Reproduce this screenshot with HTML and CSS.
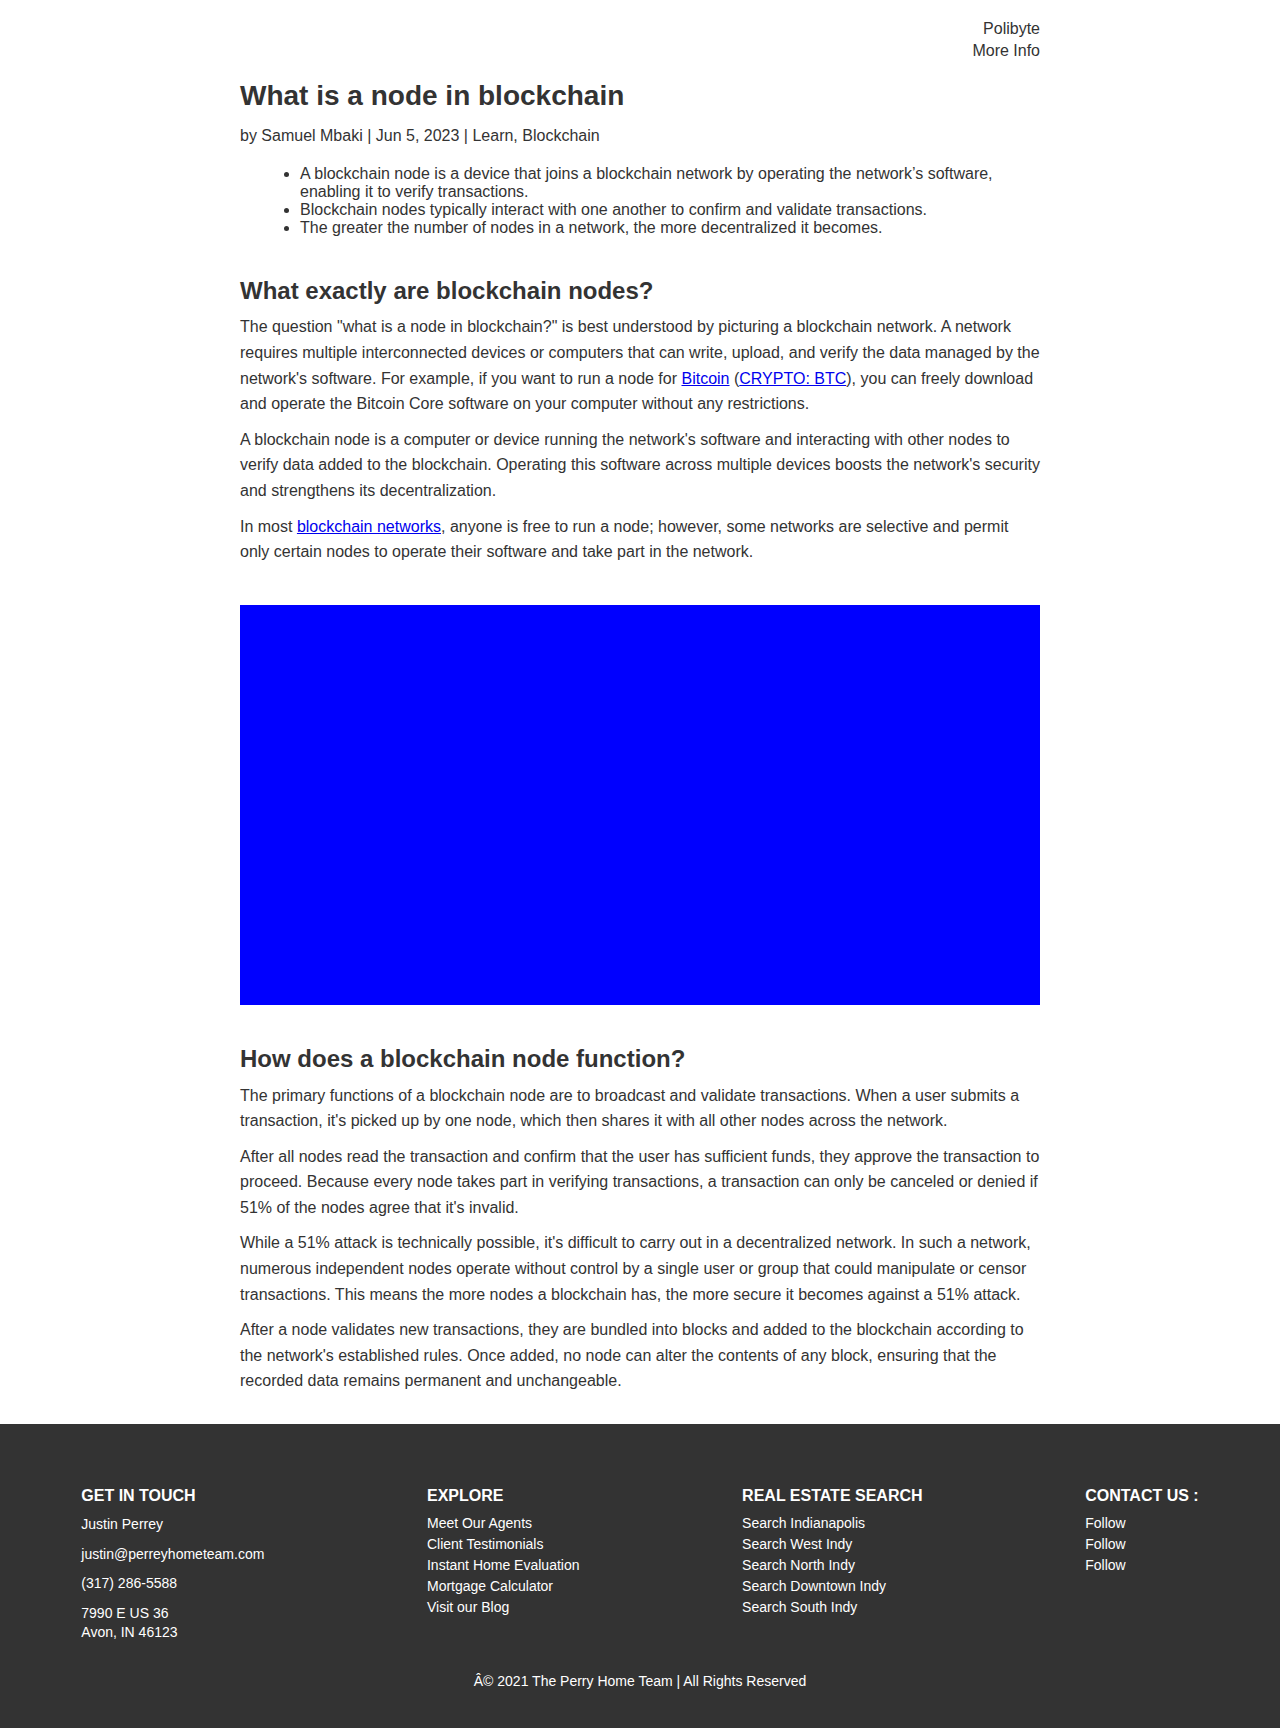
FILE: index.html
```html
<!DOCTYPE html>
<html lang="en">
<head>
<meta charset="utf-8">
<title>What is a node in blockchain</title>
<link rel="stylesheet" href="styles.css">
</head>
<body>
<div class="page">
  <header class="site-header">
    <ul class="top-nav">
      <li>Polibyte</li>
      <li>More Info</li>
    </ul>
  </header>

  <main class="article">
    <h1 class="title">What is a node in blockchain</h1>
    <p class="meta">by Samuel Mbaki | Jun 5, 2023 | Learn, Blockchain</p>
    <ul class="summary">
      <li>A blockchain node is a device that joins a blockchain network by operating the network’s software, enabling it to verify transactions.</li>
      <li>Blockchain nodes typically interact with one another to confirm and validate transactions.</li>
      <li>The greater the number of nodes in a network, the more decentralized it becomes.</li>
    </ul>

    <section class="section">
      <h2>What exactly are blockchain nodes?</h2>
      <p>The question "what is a node in blockchain?" is best understood by picturing a blockchain network. A network requires multiple interconnected devices or computers that can write, upload, and verify the data managed by the network's software. For example, if you want to run a node for <a href="#">Bitcoin</a> (<a href="#">CRYPTO: BTC</a>), you can freely download and operate the Bitcoin Core software on your computer without any restrictions.</p>
      <p>A blockchain node is a computer or device running the network's software and interacting with other nodes to verify data added to the blockchain. Operating this software across multiple devices boosts the network's security and strengthens its decentralization.</p>
      <p>In most <a href="#">blockchain networks</a>, anyone is free to run a node; however, some networks are selective and permit only certain nodes to operate their software and take part in the network.</p>
    </section>

    <div class="section figure"></div>

    <section class="section">
      <h2>How does a blockchain node function?</h2>
      <p>The primary functions of a blockchain node are to broadcast and validate transactions. When a user submits a transaction, it's picked up by one node, which then shares it with all other nodes across the network.</p>
      <p>After all nodes read the transaction and confirm that the user has sufficient funds, they approve the transaction to proceed. Because every node takes part in verifying transactions, a transaction can only be canceled or denied if 51% of the nodes agree that it's invalid.</p>
      <p>While a 51% attack is technically possible, it's difficult to carry out in a decentralized network. In such a network, numerous independent nodes operate without control by a single user or group that could manipulate or censor transactions. This means the more nodes a blockchain has, the more secure it becomes against a 51% attack.</p>
      <p>After a node validates new transactions, they are bundled into blocks and added to the blockchain according to the network's established rules. Once added, no node can alter the contents of any block, ensuring that the recorded data remains permanent and unchangeable.</p>
    </section>
  </main>
</div>

<footer class="site-footer">
  <div class="footer-cols">
    <div class="footer-col">
      <h3>GET IN TOUCH</h3>
      <p>Justin Perrey</p>
      <p>justin@perreyhometeam.com</p>
      <p>(317) 286-5588</p>
      <p>7990 E US 36<br>Avon, IN 46123</p>
    </div>
    <div class="footer-col">
      <h3>EXPLORE</h3>
      <ul class="footer-links">
        <li>Meet Our Agents</li>
        <li>Client Testimonials</li>
        <li>Instant Home Evaluation</li>
        <li>Mortgage Calculator</li>
        <li>Visit our Blog</li>
      </ul>
    </div>
    <div class="footer-col">
      <h3>REAL ESTATE SEARCH</h3>
      <ul class="footer-links">
        <li>Search Indianapolis</li>
        <li>Search West Indy</li>
        <li>Search North Indy</li>
        <li>Search Downtown Indy</li>
        <li>Search South Indy</li>
      </ul>
    </div>
    <div class="footer-col">
      <h3>CONTACT US :</h3>
      <ul class="footer-links">
        <li>Follow</li>
        <li>Follow</li>
        <li>Follow</li>
      </ul>
    </div>
  </div>
  <p class="copyright">Â© 2021 The Perry Home Team | All Rights Reserved</p>
</footer>
</body>
</html>
```

FILE: styles.css
```css
html, body {
  margin: 0;
  padding: 0;
}

body {
  font-family: "Liberation Sans", Arial, Helvetica, sans-serif;
  color: #333333;
  background: #ffffff;
  font-size: 16px;
}

.page {
  width: 800px;
  margin: 0 auto;
}

.site-header {
  padding-top: 17.6px;
}

.top-nav {
  list-style: none;
  margin: 0;
  padding: 0;
  text-align: right;
  line-height: 1.4;
}

.article {
  padding-bottom: 30px;
}

.title {
  font-size: 28px;
  line-height: 1.2;
  font-weight: bold;
  margin: 17px 0 0;
}

.meta {
  margin: 10px 0 0;
  line-height: 1.6;
}

.summary {
  margin: 16px 0 0;
  padding-left: 60px;
  line-height: normal;
}

.section {
  margin-top: 40px;
}

.section h2 {
  font-size: 24px;
  line-height: 1.2;
  font-weight: bold;
  margin: 0 0 9px;
}

.section p {
  margin: 0 0 10px;
  line-height: 1.6;
}

.section p:last-child {
  margin-bottom: 0;
}

.section a {
  color: #0000ee;
  text-decoration: underline;
}

.figure {
  height: 400px;
  background: #0000ff;
}

.site-footer {
  background: #333333;
  color: #ffffff;
  padding: 63px 0 40px;
  font-size: 14px;
}

.footer-cols {
  display: flex;
  justify-content: space-around;
  align-items: flex-start;
}

.footer-col {
  flex: none;
}

.footer-col h3 {
  font-size: 16px;
  font-weight: bold;
  line-height: normal;
  margin: 0 0 10px;
}

.footer-col p {
  margin: 0 0 10px;
  line-height: 1.4;
}

.footer-col p:last-child {
  margin-bottom: 0;
}

.footer-links {
  list-style: none;
  margin: -2px 0 0;
  padding: 0;
  line-height: 1.5;
}

.copyright {
  text-align: center;
  margin: 30px 0 0;
  line-height: normal;
}
```
